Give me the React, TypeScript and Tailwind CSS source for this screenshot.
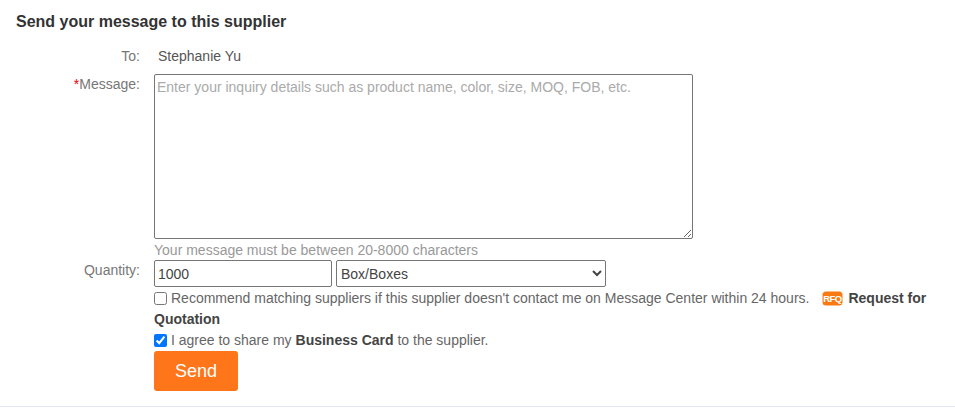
function RfqIcon() {
  return (
    <svg width="21" height="15" viewBox="0 0 21 15" className="inline-block align-[-3px]">
      <rect x="0.5" y="0.5" width="20" height="14" rx="3.5" fill="#f97a12" />
      <text x="10.5" y="11" textAnchor="middle" fontSize="9.5" fontWeight="700" fill="#fff" fontFamily="Liberation Sans, sans-serif" letterSpacing="-0.6">
        RFQ
      </text>
    </svg>
  );
}

export default function App() {
  return (
    <div className="h-[408px] w-[955px] overflow-hidden bg-white font-['Liberation_Sans',Arial,sans-serif] text-[14px] text-[#666]">
      <div className="h-[407px] border-b border-[#dfe8f2] pl-4 pt-[13px]">
        <h2 className="text-[16px] leading-[18px] font-bold text-[#333]">Send your message to this supplier</h2>

        <div className="mt-[16px] flex">
          <div className="w-[124px] text-right leading-[18px] text-[#777]">To:</div>
          <div className="ml-[18px] leading-[18px] text-[#555]">Stephanie Yu</div>
        </div>

        <div className="mt-[9px] flex">
          <div className="w-[124px] pt-px text-right leading-[18px] text-[#777]">
            <span className="text-red-600">*</span>Message:
          </div>
          <div className="ml-[14px]">
            <textarea
              placeholder="Enter your inquiry details such as product name, color, size, MOQ, FOB, etc."
              className="block h-[165px] w-[539px] rounded-[2px] border border-[#767676] px-[2px] py-[3px] text-[14px] leading-[18px] placeholder:text-[#aaa]"
            />
            <p className="mt-[2px] leading-[18px] text-[#999]">Your message must be between 20-8000 characters</p>
          </div>
        </div>

        <div className="mt-px flex">
          <div className="w-[124px] pt-px text-right leading-[18px] text-[#777]">Quantity:</div>
          <div className="ml-[14px] w-[785px]">
            <div className="flex gap-1">
              <input
                defaultValue="1000"
                className="h-[27px] w-[178px] rounded-[2px] border border-[#767676] px-[3px] text-[14px] text-[#444]"
              />
              <select className="h-[27px] w-[270px] rounded-[2px] border border-[#767676] bg-white text-[14px] text-[#444]">
                <option>Box/Boxes</option>
              </select>
            </div>
            <div className="mt-px leading-[21px]">
              <input type="checkbox" className="mr-[4px] h-[13px] w-[13px] align-[-2px]" />
              Recommend matching suppliers if this supplier doesn't contact me on Message Center within 24 hours.
              <span className="ml-[13px] mr-[5px]">
                <RfqIcon />
              </span>
              <b className="font-bold text-[#444]">Request for Quotation</b>
            </div>
            <div className="leading-[21px]">
              <input type="checkbox" defaultChecked className="mr-[4px] h-[13px] w-[13px] align-[-2px]" />
              I agree to share my <b className="font-bold text-[#444]">Business Card</b> to the supplier.
            </div>
            <button className="h-[40px] w-[84px] rounded-[3px] bg-[#ff7519] text-[18px] text-white">Send</button>
          </div>
        </div>
      </div>
    </div>
  );
}
